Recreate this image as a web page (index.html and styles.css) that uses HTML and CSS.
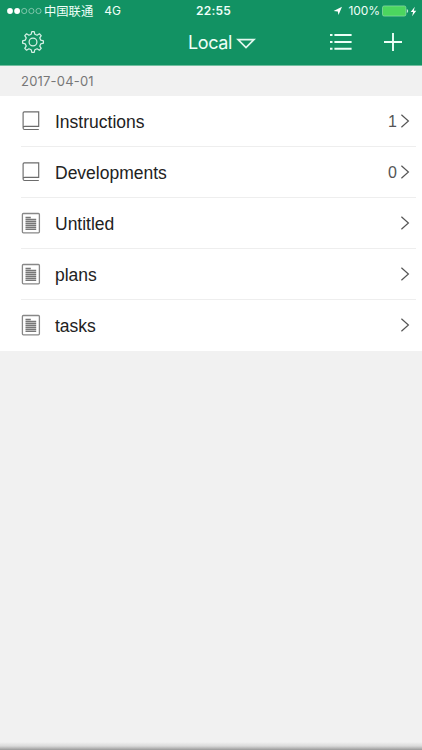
FILE: index.html
```html
<!DOCTYPE html>
<html lang="en">
<head>
<meta charset="utf-8">
<meta name="viewport" content="width=device-width">
<title>Local</title>
<link rel="stylesheet" href="styles.css">
</head>
<body>
<svg class="defs" width="0" height="0">
  <symbol id="book" viewBox="0 0 20 22"><path d="M2.1 18.2V3.1a1.2 1.2 0 0 1 1.2-1.2H17.7V16.3H3.7a1.6 1.6 0 0 0-1.6 1.7a1.5 1.5 0 0 0 1.5 1.5H17.8" fill="none" stroke="#6c6c6c" stroke-width="1.15"/></symbol>
  <symbol id="note" viewBox="0 0 20 22"><rect x="1.4" y="1.5" width="17" height="19.3" rx="1" fill="none" stroke="#888" stroke-width="1.3"/><path d="M4.5 5.5H9.8M4.5 7.5H15.2M4.5 9.5H15.2M4.5 11.5H15.2M4.5 13.5H15.2M4.5 15.5H15.2M4.5 17.3H15.2" stroke="#777" stroke-width="1.3"/></symbol>
  <symbol id="chevron" viewBox="0 0 10 14"><path d="M1.4.8L8.4 7L1.4 13.2" fill="none" stroke="#555" stroke-width="1.2"/></symbol>
</svg>
<main class="screen">
  <header class="header">
    <div class="status">
      <div class="network">
        <svg class="signal" width="36" height="8" viewBox="0 0 36 8"><g fill="#fff"><circle cx="3" cy="4" r="2.9"/><circle cx="10.1" cy="4" r="2.9"/></g><g fill="none" stroke="#b5dfce" stroke-width=".65"><circle cx="17.2" cy="4" r="2.6"/><circle cx="24.4" cy="4" r="2.6"/><circle cx="31.5" cy="4" r="2.6"/></g></svg>
        <span class="carrier">中国联通</span><span class="mobile">4G</span>
      </div>
      <time class="clock">22:55</time>
      <div class="power">
        <svg width="10" height="10" viewBox="0 0 10 10"><path d="M9 .8L5.5 9.1L4.8 5.4L.6 5.1Z" fill="#fff"/></svg>
        <span class="percent">100%</span>
        <svg class="battery" width="27" height="12" viewBox="0 0 27 12"><rect x=".5" y=".9" width="23.4" height="10.2" rx="1.7" fill="#4cd65f" stroke="#a0e4b5" stroke-width=".6"/><path d="M24.8 4.1q1.4.3 1.4 1.9t-1.4 1.9Z" fill="#c2e8d4"/></svg>
        <svg class="bolt" width="7" height="11" viewBox="0 0 7 11"><path d="M4.8.8L.7 6H3.1L2.1 10.2L6.3 4.7H3.8Z" fill="#fff"/></svg>
      </div>
    </div>
    <nav class="toolbar">
      <svg class="gear" width="24" height="24" viewBox="0 0 24 24"><g fill="none" stroke="#d5f0e5" stroke-width="1.25" stroke-linejoin="round"><path d="M10.2 4.2L10.8 1.6H13.2L13.8 4.2L16.1 5.2L18.4 3.8L20.2 5.6L18.8 7.9L19.8 10.2L22.4 10.8V13.2L19.8 13.8L18.8 16.1L20.2 18.4L18.4 20.2L16.1 18.8L13.8 19.8L13.2 22.4H10.8L10.2 19.8L7.9 18.8L5.6 20.2L3.8 18.4L5.2 16.1L4.2 13.8L1.6 13.2V10.8L4.2 10.2L5.2 7.9L3.8 5.6L5.6 3.8L7.9 5.2Z"/><circle cx="12" cy="12" r="3.9"/></g></svg>
      <div class="title"><span>Local</span><svg width="20" height="12" viewBox="0 0 20 12"><path d="M2.1 1.7H17.9L10 9.5Z" fill="none" stroke="#e3f8ef" stroke-width="1.7"/></svg></div>
      <div class="actions">
        <svg width="22" height="18" viewBox="0 0 22 18"><path d="M0 2.1H2.5M4.4 2.1H21.6M0 9H2.5M4.4 9H21.6M0 15.7H2.5M4.4 15.7H21.6" stroke="#edfff7" stroke-width="2"/></svg>
        <svg width="18" height="18" viewBox="0 0 18 18"><path d="M0 9H18M9 0V18" stroke="#edfff7" stroke-width="1.9"/></svg>
      </div>
    </nav>
  </header>
  <h2 class="date"><span>2017-04-01</span></h2>
  <ul class="list">
    <li class="row"><svg class="icon"><use href="#book"/></svg><span class="name">Instructions</span><span class="count">1</span><svg class="arrow"><use href="#chevron"/></svg></li>
    <li class="row"><svg class="icon"><use href="#book"/></svg><span class="name">Developments</span><span class="count">0</span><svg class="arrow"><use href="#chevron"/></svg></li>
    <li class="row"><svg class="icon"><use href="#note"/></svg><span class="name">Untitled</span><svg class="arrow"><use href="#chevron"/></svg></li>
    <li class="row"><svg class="icon"><use href="#note"/></svg><span class="name">plans</span><svg class="arrow"><use href="#chevron"/></svg></li>
    <li class="row"><svg class="icon"><use href="#note"/></svg><span class="name">tasks</span><svg class="arrow"><use href="#chevron"/></svg></li>
  </ul>
  <div class="bottom-shadow"></div>
</main>
</body>
</html>
```
FILE: styles.css
```css
* { box-sizing: border-box; }
body { margin: 0; font-family: "Liberation Sans", "Noto Sans CJK SC", sans-serif; }
svg { display: block; flex: none; }
.defs { position: absolute; }
.screen { height: 750px; display: flex; flex-direction: column; background: #f1f1f1; overflow: hidden; }
.header { height: 66px; flex: none; background: #129263; border-bottom: 1px solid #72bea0; color: #effff8; }
.status { height: 22px; display: grid; grid-template-columns: 1fr auto 1fr; align-items: center; padding: 0 5px 0 7px; font: 12px/22px Inter, "Noto Sans CJK SC", sans-serif; }
.network, .power { display: flex; align-items: center; }
.carrier { margin-left: 1px; font: 12.3px/22px "Noto Sans CJK SC", sans-serif; }
.mobile { margin-left: 11px; }
.clock { margin-left: 3px; font-weight: 600; font-size: 12px; letter-spacing: .2px; }
.power { justify-content: flex-end; }
.percent { margin-left: 6px; letter-spacing: -.1px; }
.battery { margin-left: 2px; }
.bolt { margin-left: 1px; }
.toolbar { height: 43px; display: grid; grid-template-columns: 1fr auto 1fr; align-items: center; padding: 0 20px 3px 21px; }
.title { display: flex; align-items: center; margin-left: 21px; padding-top: 2px; font: 18px/26px Inter, sans-serif; letter-spacing: -.4px; }
.title svg { margin: 2px 0 0 4px; }
.actions { display: flex; justify-content: flex-end; align-items: center; gap: 32px; }
.date { height: 30px; flex: none; margin: 0; padding-left: 21px; background: #f1f1f1; color: #777; font: 13px/30px Inter, sans-serif; letter-spacing: .2px; }
.list { margin: 0; padding: 0; list-style: none; background: #fff; }
.row { height: 51px; margin-left: 21px; margin-right: 6px; padding-right: 6px; display: flex; align-items: center; border-bottom: 1px solid #eee; }
.row:last-child { border-color: transparent; }
.icon { width: 20px; height: 22px; }
.name { flex: 1; margin-left: 14px; padding-top: 2px; font-size: 17.5px; line-height: 24px; color: #222; }
.count { margin-right: 3px; padding-top: 2px; font-size: 16px; color: #555; }
.arrow { width: 10px; height: 14px; }
.bottom-shadow { height: 8px; margin-top: auto; background: linear-gradient(#f1f1f1, #dadada 50%, #999); }
```
